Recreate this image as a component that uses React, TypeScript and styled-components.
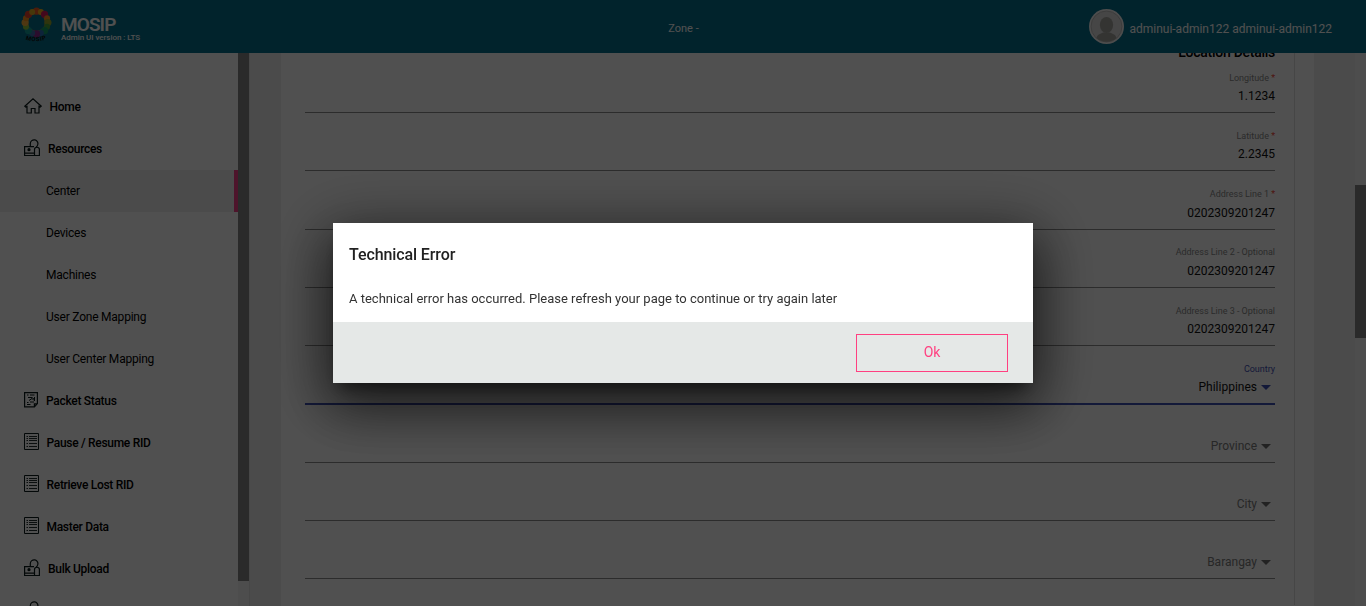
import React from "react";
import styled, { createGlobalStyle, css } from "styled-components";

const Global = createGlobalStyle`
  * { box-sizing: border-box; }
  html, body { margin: 0; height: 100%; overflow: hidden; }
  body { font-family: Roboto, "Liberation Sans", sans-serif; font-size: 12px; color: #000; background: #fff; }
`;

const Page = styled.div`
  display: flex;
  flex-direction: column;
  width: 100%;
  height: 606px;
  overflow: hidden;
`;

const Header = styled.header`
  display: grid;
  grid-template-columns: 1fr auto 1fr;
  align-items: center;
  flex: none;
  height: 53px;
  padding: 0 34px 0 21px;
  background: #06708c;
  color: #fff;
`;

const Brand = styled.div`
  display: flex;
  align-items: center;
  gap: 9px;
  height: 53px;
  padding-bottom: 4px;
`;

const BrandText = styled.div`
  display: flex;
  flex-direction: column;
  padding-top: 8px;
`;

const BrandName = styled.div`
  font-size: 19px;
  line-height: 19px;
  font-weight: 600;
  letter-spacing: -0.9px;
`;

const Version = styled.div`
  font-size: 8px;
  line-height: 8px;
  font-weight: 500;
  letter-spacing: -0.04px;
`;

const Zone = styled.div`
  font-size: 11px;
  padding: 3px 0 0 14px;
`;

const User = styled.div`
  display: flex;
  justify-content: flex-end;
  align-items: center;
  gap: 5px;
`;

const UserName = styled.span`
  padding-top: 4px;
  font-size: 12px;
  white-space: nowrap;
`;

const Body = styled.div`
  display: flex;
  flex: 1;
  min-height: 0;
`;

const Sidebar = styled.nav`
  flex: none;
  width: 238px;
  padding-top: 33px;
  overflow: hidden;
`;

const NavRow = styled.div<{ $sub?: boolean; $active?: boolean; $gap?: number }>`
  display: flex;
  align-items: center;
  gap: ${(p) => p.$gap ?? 8}px;
  height: 42px;
  padding-left: ${(p) => (p.$sub ? 46 : 24)}px;
  font-size: 12px;
  font-weight: ${(p) => (p.$sub ? 400 : 500)};
  letter-spacing: ${(p) => (p.$sub ? -0.22 : -0.3)}px;
  ${(p) =>
    p.$active &&
    css`
      background: #f0f0f0;
      border-right: 4px solid #f7408a;
    `}
  svg { flex: none; margin-top: -3px; }
`;

const ScrollTrack = styled.div<{ $w: number; $top?: number }>`
  flex: none;
  width: ${(p) => p.$w}px;
  padding-top: ${(p) => p.$top ?? 0}px;
  background: #f4f4f4;
`;

const ScrollThumb = styled.div<{ $h: number }>`
  height: ${(p) => p.$h}px;
  background: #868686;
`;

const Main = styled.main`
  display: flex;
  flex: 1;
  min-width: 0;
  padding: 0 41px 0 31px;
  background: #f0f0f0;
  border-left: 1px solid #e2e2e2;
`;

const Card = styled.section`
  flex: 1;
  padding: 0 19px 0 24px;
  background: #fff;
  overflow: hidden;
`;

const Form = styled.div`
  height: 560px;
  padding-right: 19px;
  border-right: 1px solid #dedede;
  text-align: right;
`;

const FormTitle = styled.h3`
  margin: -8px 0 0;
  height: 9.75px;
  font-size: 14px;
  line-height: 15px;
  font-weight: 500;
  letter-spacing: -0.27px;
`;

const FieldBox = styled.div`
  display: flex;
  flex-direction: column;
  justify-content: flex-end;
  height: 58.25px;
`;

const Label = styled.div<{ $focus?: boolean }>`
  font-size: 9px;
  line-height: 11px;
  letter-spacing: -0.02px;
  color: ${(p) => (p.$focus ? "#3f51b5" : "#8a8a8a")};
  i { color: #f44336; font-style: normal; }
`;

const Value = styled.div<{ $muted?: boolean }>`
  display: flex;
  justify-content: flex-end;
  align-items: center;
  height: 15px;
  margin: 5px 0 8.5px;
  font-size: 12px;
  color: ${(p) => (p.$muted ? "#7d7d7d" : "#101010")};
`;

const Arrow = styled.span<{ $focus?: boolean }>`
  margin: 1px 4px 0 4px;
  border: 5px solid transparent;
  border-top-color: ${(p) => (p.$focus ? "#3f51b5" : "#6e6e6e")};
  border-bottom: 0;
`;

const Rule = styled.div<{ $focus?: boolean }>`
  flex: none;
  height: 1px;
  background: ${(p) => (p.$focus ? "#3f51b5" : "#8c8c8c")};
  box-shadow: ${(p) => (p.$focus ? "0 1px 0 #3f51b5" : "none")};
`;

const Backdrop = styled.div`
  position: fixed;
  inset: 0;
  display: flex;
  align-items: center;
  justify-content: center;
  background: rgba(0, 0, 0, 0.686);
`;

const Dialog = styled.div`
  width: 700px;
  height: 160px;
  background: #fff;
  box-shadow:
    0 11px 15px -7px rgba(0, 0, 0, 0.5),
    0 24px 48px 3px rgba(0, 0, 0, 0.42),
    0 11px 62px 9px rgba(0, 0, 0, 0.4);
`;

const DialogBody = styled.div`
  height: 99px;
  padding: 22px 16px 0;
`;

const DialogTitle = styled.h2`
  margin: 0 0 25px;
  font-size: 16px;
  line-height: 20px;
  font-weight: 500;
  letter-spacing: -0.1px;
  color: #212121;
`;

const DialogText = styled.p`
  margin: 0;
  font-size: 13px;
  line-height: 18px;
  color: #333;
`;

const DialogFooter = styled.div`
  display: flex;
  justify-content: flex-end;
  height: 61px;
  padding: 12px 25px 0 0;
  background: #e5e8e7;
`;

const OkButton = styled.button`
  width: 152px;
  height: 38px;
  padding: 0 0 2px;
  border: 1px solid #ff4081;
  background: transparent;
  color: #ff4081;
  font: 400 14px Roboto, sans-serif;
`;

const ink = { fill: "none", stroke: "#0c1a1a", strokeWidth: 1.2 };

const HomeIcon = () => (
  <svg width="18" height="16" viewBox="0 0 18 16" {...ink}>
    <path d="M.8 8.2 9 .9l8.200 7.300-1 .9-1.200-.7V15H11v-4.500H7.300V15H3V8.400l-1.300.7z" />
  </svg>
);

const ResourceIcon = () => (
  <svg width="16" height="18" viewBox="0 0 16 18" {...ink}>
    <path d="M6.300 7V4.500a3.800 3.800 0 1 1 7.300 1.600c-.3.900-.9 1.500-1.500 1.900" />
    <path d="M10 16.500H.6V7.600H10M.6 14.200H10M10.500 16.500V10.500c0-3 4.900-3 4.900 0v6z" />
    <circle cx="5" cy="10.700" r="1" fill="#0c1a1a" />
  </svg>
);

const PacketIcon = () => (
  <svg width="14" height="16" viewBox="0 0 14 16" {...ink}>
    <path d="M.6.6h12.800v11l-3 3.300H.6zM10.400 14.900v-3h3" />
    <path d="M3 3h1.500M6 3h4.500M4 5.500h4l2.500 2M10.500 5v4M5 8.500l3-2 2 2M3 10.500h1.500M6 10h4M3 12.500h3.500" strokeWidth="1" />
  </svg>
);

const ListIcon = () => (
  <svg width="15" height="17" viewBox="0 0 15 17" {...ink}>
    <path d="M.5.5h14v16H.5z" strokeWidth="1" />
    <path d="M2.500 3.500h1.500M5 3.500h8M2.500 5.500h1.500M5 5.500h8M2.500 7.500h1.500M5 7.500h8M2.500 10.500h1.500M5 10.500h8M2.500 13.500h1.500M5 13.500h8" strokeWidth=".9" />
  </svg>
);

const ringColors = ["#f15a24", "#f7b61d", "#d91b5c", "#f7941d", "#9aa82a", "#4aa63c", "#12a16a", "#2b6fb8", "#8a2b8f", "#3f6fb0", "#12a19a", "#8cc63f", "#fbb03b", "#f7941d", "#e8412c", "#e0b021"];

const Logo = () => (
  <svg width="31" height="35" viewBox="0 0 31 35">
    <circle cx="15.500" cy="15.500" r="11" fill="none" stroke="#e58a2c" strokeWidth="5" />
    {ringColors.map((c, i) => {
      const a = (i / ringColors.length) * Math.PI * 2 - Math.PI / 2;
      return <circle key={i} cx={15.5 + 11.4 * Math.cos(a)} cy={15.5 + 11.4 * Math.sin(a)} r={i % 2 ? 3 : 3.6} fill={c} />;
    })}
    <path id="logo-arc" d="M4.500 32.500Q15.500 36.500 27.500 31.500" fill="none" />
    <text fontSize="6" fontWeight="700" letterSpacing=".6" fill="#111">
      <textPath href="#logo-arc">MOSIP</textPath>
    </text>
  </svg>
);

const Avatar = () => (
  <svg width="35" height="35" viewBox="0 0 35 35">
    <circle cx="17.500" cy="17.500" r="17.500" fill="#f4f4f4" />
    <circle cx="17.500" cy="17.500" r="15.500" fill="#dedede" stroke="#b5b5b5" strokeWidth=".8" />
    <ellipse cx="17.500" cy="16" rx="6.600" ry="8" fill="#a5a5a0" />
    <path d="M7.500 29c1-4 4.500-4.500 7-5.500h6c2.500 1 6 1.500 7 5.500a15.200 15.200 0 0 1-20 0z" fill="#a5a5a0" />
  </svg>
);

type NavItem = { text: string; icon?: React.ReactNode; gap?: number; active?: boolean };

const nav: NavItem[] = [
  { text: "Home", icon: <HomeIcon />, gap: 7.5 },
  { text: "Resources", icon: <ResourceIcon /> },
  { text: "Center", active: true },
  { text: "Devices" },
  { text: "Machines" },
  { text: "User Zone Mapping" },
  { text: "User Center Mapping" },
  { text: "Packet Status", icon: <PacketIcon /> },
  { text: "Pause / Resume RID", icon: <ListIcon />, gap: 7.5 },
  { text: "Retrieve Lost RID", icon: <ListIcon />, gap: 7.5 },
  { text: "Master Data", icon: <ListIcon />, gap: 7.5 },
  { text: "Bulk Upload", icon: <ResourceIcon /> },
  { text: "", icon: <ResourceIcon /> },
];

type FieldProps = { label?: string; value: string; required?: boolean; select?: boolean; focus?: boolean };

const fields: FieldProps[] = [
  { label: "Longitude", value: "1.1234", required: true },
  { label: "Latitude", value: "2.2345", required: true },
  { label: "Address Line 1", value: "0202309201247", required: true },
  { label: "Address Line 2 - Optional", value: "0202309201247" },
  { label: "Address Line 3 - Optional", value: "0202309201247" },
  { label: "Country", value: "Philippines", select: true, focus: true },
  { value: "Province", select: true },
  { value: "City", select: true },
  { value: "Barangay", select: true },
];

const Field = ({ label, value, required, select, focus }: FieldProps) => (
  <FieldBox>
    {label && (
      <Label $focus={focus}>
        {label}
        {required && <i> *</i>}
      </Label>
    )}
    <Value $muted={!label}>
      {value}
      {select && <Arrow $focus={focus} />}
    </Value>
    <Rule $focus={focus} />
  </FieldBox>
);

export default function App() {
  return (
    <>
      <Global />
      <Page>
        <Header>
          <Brand>
            <Logo />
            <BrandText>
              <BrandName>MOSIP</BrandName>
              <Version>Admin UI version : LTS</Version>
            </BrandText>
          </Brand>
          <Zone>Zone -</Zone>
          <User>
            <Avatar />
            <UserName>adminui-admin122 adminui-admin122</UserName>
          </User>
        </Header>
        <Body>
          <Sidebar>
            {nav.map((n, i) => (
              <NavRow key={i} $sub={!n.icon} $active={n.active} $gap={n.gap}>
                {n.icon}
                {n.text}
              </NavRow>
            ))}
          </Sidebar>
          <ScrollTrack $w={11}>
            <ScrollThumb $h={528} />
          </ScrollTrack>
          <Main>
            <Card>
              <Form>
                <FormTitle>Location Details</FormTitle>
                {fields.map((f, i) => (
                  <Field key={i} {...f} />
                ))}
              </Form>
            </Card>
          </Main>
          <ScrollTrack $w={11} $top={132}>
            <ScrollThumb $h={153} />
          </ScrollTrack>
        </Body>
      </Page>
      <Backdrop>
        <Dialog role="dialog">
          <DialogBody>
            <DialogTitle>Technical Error</DialogTitle>
            <DialogText>A technical error has occurred. Please refresh your page to continue or try again later</DialogText>
          </DialogBody>
          <DialogFooter>
            <OkButton>Ok</OkButton>
          </DialogFooter>
        </Dialog>
      </Backdrop>
    </>
  );
}
